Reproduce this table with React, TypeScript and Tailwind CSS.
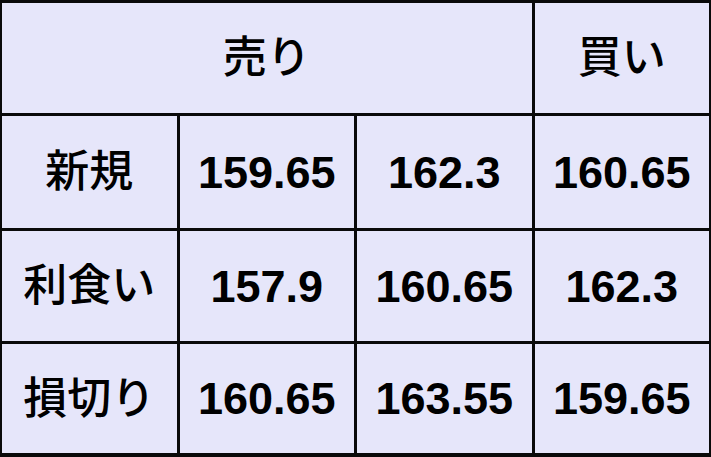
const rows: { label: string; values: string[] }[] = [
  { label: "新規", values: ["159.65", "162.3", "160.65"] },
  { label: "利食い", values: ["157.9", "160.65", "162.3"] },
  { label: "損切り", values: ["160.65", "163.55", "159.65"] },
];

function Cell({ children, className = "" }: { children: React.ReactNode; className?: string }) {
  return (
    <div className={`flex items-center justify-center bg-[#e6e6fa] ${className}`}>
      {children}
    </div>
  );
}

export default function App() {
  return (
    <div
      className="w-[711px] h-[457px] bg-[#0a0a0a] pt-[3px] pb-[4px] px-[2px] grid grid-cols-4 grid-rows-[110px_112px_110px_109px] gap-[3px] text-black font-bold text-[45px] leading-none"
      style={{ fontFamily: '"Liberation Sans", "Noto Sans CJK JP", sans-serif' }}
    >
      <Cell className="col-span-3 font-medium text-[44px]">売り</Cell>
      <Cell className="font-medium text-[44px]">買い</Cell>
      {rows.map((row) => (
        <>
          <Cell key={row.label} className="font-medium text-[44px]">
            {row.label}
          </Cell>
          {row.values.map((v, i) => (
            <Cell key={row.label + i}>{v}</Cell>
          ))}
        </>
      ))}
    </div>
  );
}
